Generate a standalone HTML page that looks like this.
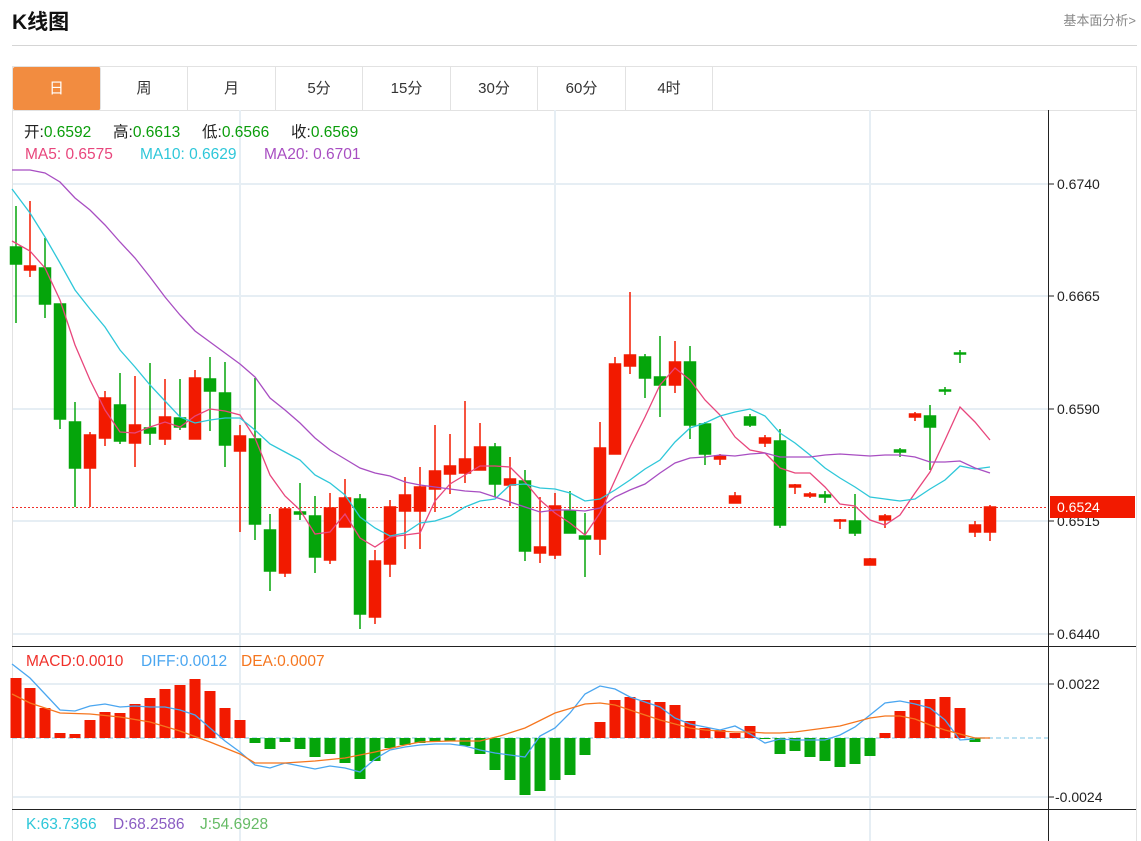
<!DOCTYPE html>
<html><head><meta charset="utf-8"><style>
body{margin:0;background:#fff;width:1141px;height:841px;overflow:hidden;font-family:"Liberation Sans","Noto Sans CJK SC",sans-serif;position:relative}
.t{position:absolute;left:12px;top:6px;font-size:21px;font-weight:bold;color:#111}
.r{position:absolute;right:5px;top:10px;font-size:13px;color:#888}
.hl{position:absolute;left:12px;top:45px;width:1125px;height:1px;background:#d5d5d5}
.tabs{position:absolute;left:12px;top:66px;width:1123px;height:43px;border:1px solid #e2e2e2;border-bottom:1px solid #e2e2e2}
.tab{position:absolute;top:0;height:43px;line-height:43px;text-align:center;font-size:15px;color:#333;border-right:1px solid #e2e2e2;box-sizing:border-box}
svg{position:absolute;left:0;top:0}
</style></head><body>
<div class="t">K线图</div>
<div class="r">基本面分析&gt;</div>
<div class="hl"></div>
<div class="tabs">
<div class="tab" style="left:0;width:88px;background:#f28c40;color:#fff;border-radius:2px">日</div>
<div class="tab" style="left:88px;width:87px">周</div>
<div class="tab" style="left:175px;width:88px">月</div>
<div class="tab" style="left:263px;width:87px">5分</div>
<div class="tab" style="left:350px;width:88px">15分</div>
<div class="tab" style="left:438px;width:87px">30分</div>
<div class="tab" style="left:525px;width:88px">60分</div>
<div class="tab" style="left:613px;width:87px">4时</div>
</div>
<svg width="1141" height="841" font-family="Liberation Sans, Noto Sans CJK SC, sans-serif">
<g stroke="#e6eef4" stroke-width="2">
<line x1="12" y1="184" x2="1048" y2="184"/><line x1="12" y1="296" x2="1048" y2="296"/><line x1="12" y1="409" x2="1048" y2="409"/><line x1="12" y1="521" x2="1048" y2="521"/><line x1="12" y1="634" x2="1048" y2="634"/>
<line x1="12" y1="684" x2="1048" y2="684"/><line x1="12" y1="797" x2="1048" y2="797"/>
<line x1="240" y1="110" x2="240" y2="841"/><line x1="555" y1="110" x2="555" y2="841"/><line x1="870" y1="110" x2="870" y2="841"/>
</g>
<line x1="12.5" y1="110" x2="12.5" y2="841" stroke="#e2e2e2"/>
<line x1="1136.5" y1="110" x2="1136.5" y2="841" stroke="#e2e2e2"/>
<line x1="1048.5" y1="110" x2="1048.5" y2="841" stroke="#222"/>
<line x1="12" y1="646.5" x2="1136" y2="646.5" stroke="#222"/>
<line x1="12" y1="809.5" x2="1136" y2="809.5" stroke="#222"/>
<g stroke="#222"><line x1="1048" y1="184" x2="1054" y2="184"/><line x1="1048" y1="296" x2="1054" y2="296"/><line x1="1048" y1="409" x2="1054" y2="409"/><line x1="1048" y1="521" x2="1054" y2="521"/><line x1="1048" y1="634" x2="1054" y2="634"/><line x1="1048" y1="684" x2="1054" y2="684"/><line x1="1048" y1="797" x2="1054" y2="797"/></g>
<g font-size="14" fill="#222"><text x="1057" y="189">0.6740</text><text x="1057" y="301">0.6665</text><text x="1057" y="414">0.6590</text><text x="1057" y="526">0.6515</text><text x="1057" y="639">0.6440</text><text x="1057" y="689">0.0022</text><text x="1055" y="802">-0.0024</text></g>
<line x1="12" y1="507.5" x2="1048" y2="507.5" stroke="#f0302a" stroke-dasharray="2,2"/>
<rect x="1050" y="496" width="85" height="22" fill="#f21a00"/>
<text x="1057" y="512" font-size="14" fill="#fff">0.6524</text>
<line x1="12" y1="738" x2="1048" y2="738" stroke="#a8d8ee" stroke-dasharray="5,3" stroke-width="1.5"/>
<g font-size="15.5">
<text x="24" y="137" fill="#222">开:<tspan fill="#0a9d0a">0.6592</tspan></text>
<text x="113" y="137" fill="#222">高:<tspan fill="#0a9d0a">0.6613</tspan></text>
<text x="202" y="137" fill="#222">低:<tspan fill="#0a9d0a">0.6566</tspan></text>
<text x="291" y="137" fill="#222">收:<tspan fill="#0a9d0a">0.6569</tspan></text>
<text x="25" y="159" fill="#e8467c">MA5: 0.6575</text>
<text x="140" y="159" fill="#2ec7d9">MA10: 0.6629</text>
<text x="264" y="159" fill="#a84ec2">MA20: 0.6701</text>
<text x="26" y="666" fill="#f0302a">MACD:0.0010</text>
<text x="141" y="666" fill="#4aa6f0">DIFF:0.0012</text>
<text x="241" y="666" fill="#f5761f">DEA:0.0007</text>
<text x="26" y="829" fill="#2ec7d9">K:63.7366</text>
<text x="113" y="829" fill="#8a5cc2">D:68.2586</text>
<text x="200" y="829" fill="#66bb66">J:54.6928</text>
</g>
<g fill="#f21a00" stroke="#f21a00" stroke-width="1.5" id="R">
<line x1="30" y1="201" x2="30" y2="277"/><rect x="24.5" y="266" width="11" height="4"/>
<line x1="90" y1="432" x2="90" y2="507"/><rect x="84.5" y="435" width="11" height="33"/>
<line x1="105" y1="391" x2="105" y2="446"/><rect x="99.5" y="398" width="11" height="40"/>
<line x1="135" y1="376" x2="135" y2="467"/><rect x="129.5" y="425" width="11" height="18"/>
<line x1="165" y1="379" x2="165" y2="445"/><rect x="159.5" y="417" width="11" height="22"/>
<line x1="195" y1="370" x2="195" y2="439"/><rect x="189.5" y="378" width="11" height="61"/>
<line x1="240" y1="425" x2="240" y2="532"/><rect x="234.5" y="436" width="11" height="15"/>
<line x1="285" y1="507" x2="285" y2="577"/><rect x="279.5" y="509" width="11" height="64"/>
<line x1="330" y1="493" x2="330" y2="564"/><rect x="324.5" y="508" width="11" height="52"/>
<line x1="345" y1="479" x2="345" y2="527"/><rect x="339.5" y="498" width="11" height="29"/>
<line x1="375" y1="550" x2="375" y2="624"/><rect x="369.5" y="561" width="11" height="56"/>
<line x1="390" y1="500" x2="390" y2="577"/><rect x="384.5" y="507" width="11" height="57"/>
<line x1="405" y1="477" x2="405" y2="549"/><rect x="399.5" y="495" width="11" height="16"/>
<line x1="420" y1="467" x2="420" y2="549"/><rect x="414.5" y="487" width="11" height="24"/>
<line x1="435" y1="425" x2="435" y2="512"/><rect x="429.5" y="471" width="11" height="18"/>
<line x1="450" y1="434" x2="450" y2="494"/><rect x="444.5" y="466" width="11" height="8"/>
<line x1="465" y1="401" x2="465" y2="483"/><rect x="459.5" y="459" width="11" height="14"/>
<line x1="480" y1="423" x2="480" y2="470"/><rect x="474.5" y="447" width="11" height="23"/>
<line x1="510" y1="457" x2="510" y2="506"/><rect x="504.5" y="479" width="11" height="6"/>
<line x1="540" y1="497" x2="540" y2="563"/><rect x="534.5" y="547" width="11" height="6"/>
<line x1="555" y1="493" x2="555" y2="559"/><rect x="549.5" y="506" width="11" height="49"/>
<line x1="600" y1="422" x2="600" y2="555"/><rect x="594.5" y="448" width="11" height="91"/>
<line x1="615" y1="357" x2="615" y2="454"/><rect x="609.5" y="364" width="11" height="90"/>
<line x1="630" y1="292" x2="630" y2="374"/><rect x="624.5" y="355" width="11" height="11"/>
<line x1="675" y1="341" x2="675" y2="393"/><rect x="669.5" y="362" width="11" height="23"/>
<line x1="720" y1="454" x2="720" y2="465"/><rect x="714.5" y="456" width="11" height="3"/>
<line x1="735" y1="492" x2="735" y2="503"/><rect x="729.5" y="496" width="11" height="7"/>
<line x1="765" y1="435" x2="765" y2="447"/><rect x="759.5" y="438" width="11" height="5"/>
<line x1="795" y1="484" x2="795" y2="494"/><rect x="789.5" y="485" width="11" height="2"/>
<line x1="810" y1="492" x2="810" y2="498"/><rect x="804.5" y="494" width="11" height="2"/>
<line x1="840" y1="519" x2="840" y2="529"/><rect x="834.5" y="520" width="11" height="1"/>
<line x1="870" y1="558" x2="870" y2="565"/><rect x="864.5" y="559" width="11" height="6"/>
<line x1="885" y1="514" x2="885" y2="528"/><rect x="879.5" y="516" width="11" height="4"/>
<line x1="915" y1="412" x2="915" y2="421"/><rect x="909.5" y="414" width="11" height="3"/>
<line x1="975" y1="521" x2="975" y2="537"/><rect x="969.5" y="525" width="11" height="7"/>
<line x1="990" y1="505" x2="990" y2="541"/><rect x="984.5" y="507" width="11" height="25"/>
</g>
<g fill="#05a50b" stroke="#05a50b" stroke-width="1.5">
<line x1="16" y1="206" x2="16" y2="323"/><rect x="10.5" y="247" width="11" height="17"/>
<line x1="45" y1="238" x2="45" y2="318"/><rect x="39.5" y="268" width="11" height="36"/>
<line x1="60" y1="304" x2="60" y2="429"/><rect x="54.5" y="304" width="11" height="115"/>
<line x1="75" y1="402" x2="75" y2="507"/><rect x="69.5" y="422" width="11" height="46"/>
<line x1="120" y1="373" x2="120" y2="444"/><rect x="114.5" y="405" width="11" height="36"/>
<line x1="150" y1="363" x2="150" y2="445"/><rect x="144.5" y="428" width="11" height="5"/>
<line x1="180" y1="379" x2="180" y2="430"/><rect x="174.5" y="418" width="11" height="9"/>
<line x1="210" y1="357" x2="210" y2="431"/><rect x="204.5" y="379" width="11" height="12"/>
<line x1="225" y1="362" x2="225" y2="467"/><rect x="219.5" y="393" width="11" height="52"/>
<line x1="255" y1="378" x2="255" y2="540"/><rect x="249.5" y="439" width="11" height="85"/>
<line x1="270" y1="514" x2="270" y2="591"/><rect x="264.5" y="530" width="11" height="41"/>
<line x1="300" y1="483" x2="300" y2="520"/><rect x="294.5" y="512" width="11" height="2"/>
<line x1="315" y1="496" x2="315" y2="573"/><rect x="309.5" y="516" width="11" height="41"/>
<line x1="360" y1="494" x2="360" y2="629"/><rect x="354.5" y="499" width="11" height="115"/>
<line x1="495" y1="443" x2="495" y2="497"/><rect x="489.5" y="447" width="11" height="37"/>
<line x1="525" y1="470" x2="525" y2="561"/><rect x="519.5" y="481" width="11" height="70"/>
<line x1="570" y1="491" x2="570" y2="533"/><rect x="564.5" y="511" width="11" height="22"/>
<line x1="585" y1="513" x2="585" y2="577"/><rect x="579.5" y="536" width="11" height="3"/>
<line x1="645" y1="354" x2="645" y2="398"/><rect x="639.5" y="357" width="11" height="21"/>
<line x1="660" y1="336" x2="660" y2="417"/><rect x="654.5" y="377" width="11" height="8"/>
<line x1="690" y1="346" x2="690" y2="439"/><rect x="684.5" y="362" width="11" height="63"/>
<line x1="705" y1="422" x2="705" y2="465"/><rect x="699.5" y="424" width="11" height="30"/>
<line x1="750" y1="414" x2="750" y2="427"/><rect x="744.5" y="417" width="11" height="8"/>
<line x1="780" y1="429" x2="780" y2="528"/><rect x="774.5" y="441" width="11" height="84"/>
<line x1="825" y1="491" x2="825" y2="503"/><rect x="819.5" y="495" width="11" height="2"/>
<line x1="855" y1="494" x2="855" y2="536"/><rect x="849.5" y="521" width="11" height="12"/>
<line x1="900" y1="448" x2="900" y2="457"/><rect x="894.5" y="450" width="11" height="2"/>
<line x1="930" y1="405" x2="930" y2="470"/><rect x="924.5" y="416" width="11" height="11"/>
<line x1="945" y1="387" x2="945" y2="395"/><rect x="939.5" y="390" width="11" height="1"/>
<line x1="960" y1="350" x2="960" y2="363"/><rect x="954.5" y="353" width="11" height="1"/>
</g>
<g fill="none" stroke-width="1.3">
<polyline stroke="#e8467c" points="12,241 30,251 45,268 60,300 75,345 90,380 105,410 120,432 135,433 150,427 165,422 180,427 195,416 210,409 225,411 240,415 255,438 270,475 285,496 300,510 315,534 330,532 345,514 360,538 375,547 390,537 405,535 420,533 435,501 450,484 465,475 480,466 495,466 510,467 525,482 540,500 555,513 570,523 585,535 600,513 615,480 630,447 645,417 660,385 675,368 690,380 705,400 720,415 735,437 750,450 765,453 780,468 795,473 810,473 825,487 840,504 855,506 870,520 885,525 900,515 915,493 930,472 945,440 960,407 975,422 990,440"/>
<polyline stroke="#2ec7d9" points="12,189 30,213 45,237 60,263 75,290 90,309 105,327 120,350 135,367 150,385 165,401 180,417 195,423 210,420 225,418 240,418 255,430 270,444 285,452 300,460 315,475 330,483 345,495 360,517 375,528 390,536 405,533 420,523 435,521 450,516 465,507 480,501 495,499 510,485 525,484 540,488 555,489 570,493 585,501 600,499 615,490 630,480 645,469 660,460 675,442 690,428 705,423 720,416 735,412 750,409 765,416 780,433 795,443 810,455 825,468 840,478 855,487 870,497 885,499 900,501 915,499 930,489 945,480 960,466 975,469 990,467"/>
<polyline stroke="#a84ec2" points="12,170 30,170 45,173 60,182 75,198 90,210 105,225 120,242 135,258 150,277 165,297 180,315 195,331 210,342 225,353 240,364 255,377 270,398 285,410 300,423 315,438 330,450 345,459 360,468 375,473 390,476 405,482 420,485 435,487 450,489 465,491 480,492 495,497 510,502 525,507 540,512 555,510 570,510 585,511 600,508 615,497 630,490 645,484 660,473 675,463 690,458 705,457 720,455 735,456 750,454 765,453 780,457 795,457 810,457 825,455 840,454 855,455 870,456 885,455 900,455 915,457 930,462 945,462 960,461 975,468 990,473"/>
</g>
<g fill="#f21a00">
<rect x="10.5" y="678" width="11" height="60"/><rect x="24.5" y="688" width="11" height="50"/><rect x="39.5" y="708" width="11" height="30"/><rect x="54.5" y="733" width="11" height="5"/><rect x="69.5" y="734" width="11" height="4"/><rect x="84.5" y="720" width="11" height="18"/><rect x="99.5" y="712" width="11" height="26"/><rect x="114.5" y="713" width="11" height="25"/><rect x="129.5" y="704" width="11" height="34"/><rect x="144.5" y="698" width="11" height="40"/><rect x="159.5" y="689" width="11" height="49"/><rect x="174.5" y="685" width="11" height="53"/><rect x="189.5" y="679" width="11" height="59"/><rect x="204.5" y="691" width="11" height="47"/><rect x="219.5" y="708" width="11" height="30"/><rect x="234.5" y="720" width="11" height="18"/>
<rect x="594.5" y="722" width="11" height="16"/><rect x="609.5" y="700" width="11" height="38"/><rect x="624.5" y="697" width="11" height="41"/><rect x="639.5" y="700" width="11" height="38"/><rect x="654.5" y="702" width="11" height="36"/><rect x="669.5" y="705" width="11" height="33"/><rect x="684.5" y="721" width="11" height="17"/><rect x="699.5" y="728" width="11" height="10"/><rect x="714.5" y="730" width="11" height="8"/><rect x="729.5" y="733" width="11" height="5"/><rect x="744.5" y="726" width="11" height="12"/>
<rect x="879.5" y="733" width="11" height="5"/><rect x="894.5" y="711" width="11" height="27"/><rect x="909.5" y="700" width="11" height="38"/><rect x="924.5" y="699" width="11" height="39"/><rect x="939.5" y="697" width="11" height="41"/><rect x="954.5" y="708" width="11" height="30"/>
</g>
<g fill="#05a50b">
<rect x="249.5" y="738" width="11" height="5"/><rect x="264.5" y="738" width="11" height="11"/><rect x="279.5" y="738" width="11" height="4"/><rect x="294.5" y="738" width="11" height="11"/><rect x="309.5" y="738" width="11" height="19"/><rect x="324.5" y="738" width="11" height="16"/><rect x="339.5" y="738" width="11" height="25"/><rect x="354.5" y="738" width="11" height="41"/><rect x="369.5" y="738" width="11" height="23"/><rect x="384.5" y="738" width="11" height="10"/><rect x="399.5" y="738" width="11" height="7"/><rect x="414.5" y="738" width="11" height="5"/><rect x="429.5" y="738" width="11" height="4"/><rect x="444.5" y="738" width="11" height="3"/><rect x="459.5" y="738" width="11" height="8"/><rect x="474.5" y="738" width="11" height="16"/><rect x="489.5" y="738" width="11" height="32"/><rect x="504.5" y="738" width="11" height="42"/><rect x="519.5" y="738" width="11" height="57"/><rect x="534.5" y="738" width="11" height="53"/><rect x="549.5" y="738" width="11" height="42"/><rect x="564.5" y="738" width="11" height="37"/><rect x="579.5" y="738" width="11" height="17"/>
<rect x="759.5" y="738" width="11" height="1"/><rect x="774.5" y="738" width="11" height="16"/><rect x="789.5" y="738" width="11" height="13"/><rect x="804.5" y="738" width="11" height="19"/><rect x="819.5" y="738" width="11" height="23"/><rect x="834.5" y="738" width="11" height="29"/><rect x="849.5" y="738" width="11" height="26"/><rect x="864.5" y="738" width="11" height="18"/><rect x="969.5" y="738" width="11" height="4"/>
</g>
<g fill="none" stroke-width="1.3">
<polyline stroke="#4aa6f0" points="12,664 30,678 60,710 75,711 90,706 105,704 120,707 135,706 150,707 165,707 180,710 195,715 210,728 225,741 240,752 255,765 270,768 285,763 300,766 315,769 330,766 345,768 360,772 375,759 390,750 405,747 420,745 435,744 450,744 465,746 480,750 495,753 510,755 525,757 540,736 555,728 570,713 585,694 600,686 615,689 630,697 645,702 660,707 675,718 690,724 705,727 720,730 735,726 750,734 765,743 780,739 795,740 810,740 825,740 840,735 855,727 870,715 885,703 900,701 915,704 930,708 945,720 960,740 975,739"/>
<polyline stroke="#f5761f" points="12,694 30,703 60,713 90,714 120,717 150,722 180,731 210,742 240,754 255,763 285,763 315,761 345,758 375,752 405,745 420,742 450,741 480,741 500,736 525,728 555,713 585,704 600,703 615,705 630,710 645,715 660,720 675,724 690,728 705,730 720,731 735,732 750,732 765,733 780,733 795,732 810,730 825,728 840,726 855,722 870,718 885,716 900,716 915,719 930,725 945,730 960,734 975,738 990,738"/>
</g>
</svg>
</body></html>
